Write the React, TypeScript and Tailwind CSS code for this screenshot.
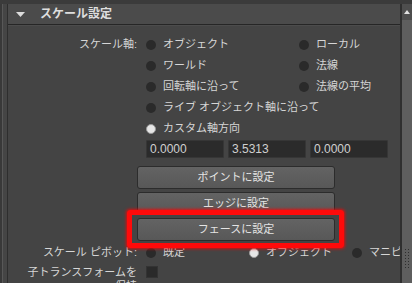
const font = "font-['Liberation_Sans','Noto_Sans_CJK_JP',sans-serif]"

function Radio({ checked = false }: { checked?: boolean }) {
  return checked ? (
    <span className="w-[10px] h-[10px] rounded-full bg-[#e6e6e6] border border-[#9a9a9a] shrink-0" />
  ) : (
    <span className="w-[10px] h-[10px] rounded-full bg-[#2a2a2a] shrink-0" />
  )
}

function Option({ label, checked, width }: { label: string; checked?: boolean; width: string }) {
  return (
    <div className={`flex items-center gap-[7px] shrink-0 ${width}`}>
      <Radio checked={checked} />
      <span className="whitespace-nowrap">{label}</span>
    </div>
  )
}

function Row({ label, children }: { label?: string; children: React.ReactNode }) {
  return (
    <div className="flex items-center h-[21px]">
      <div className="w-[129px] shrink-0 text-right whitespace-nowrap">{label}</div>
      <div className="flex items-center ml-[9px]">{children}</div>
    </div>
  )
}

function Field({ value }: { value: string }) {
  return (
    <div className="w-[78px] h-[18px] bg-[#2b2b2b] border border-[#363636] rounded-[1px] flex items-center pl-[3px] text-[#d0d0d0] text-[12px]">
      {value}
    </div>
  )
}

function Btn({ label }: { label: string }) {
  return (
    <div className="w-[198px] h-[23px] rounded-[3px] border border-[#2c2c2c] bg-gradient-to-b from-[#636363] to-[#585858] flex items-center justify-center text-[#e4e4e4]">
      {label}
    </div>
  )
}

export default function App() {
  return (
    <div className={`relative w-[412px] h-[283px] overflow-hidden bg-[#3b3b3b] flex flex-col text-[11px] leading-none text-[#d6d6d6] ${font}`}>
      <div className="h-[4px] shrink-0" />
      <div className="flex flex-1">
        <div className="w-[2px] shrink-0 bg-[#393939]" />
        <div className="w-[1px] shrink-0 bg-[#585858]" />
        <div className="w-[4px] shrink-0 bg-[#454545]" />
        <div className="w-[1px] shrink-0 bg-[#2e2e2e]" />

        <div className="flex-1 min-w-0 overflow-hidden flex flex-col">
          {/* header */}
          <div className="h-[21px] bg-[#4b4b4b] border-b border-[#262626] flex items-center">
            <svg width="9" height="5" viewBox="0 0 9 5" className="ml-[8px]">
              <polygon points="0,0 9,0 4.5,5" fill="#dcdcdc" />
            </svg>
            <span className="ml-[15px] font-bold text-[12px] text-[#dedede]">スケール設定</span>
          </div>

          {/* content */}
          <div className="flex-1 bg-[#444444] border-t border-[#4c4c4c] pt-[8px]">
            <Row label="スケール軸:">
              <Option label="オブジェクト" width="w-[153px]" />
              <Option label="ローカル" width="w-[90px]" />
            </Row>
            <Row>
              <Option label="ワールド" width="w-[153px]" />
              <Option label="法線" width="w-[90px]" />
            </Row>
            <Row>
              <Option label="回転軸に沿って" width="w-[153px]" />
              <Option label="法線の平均" width="w-[90px]" />
            </Row>
            <Row>
              <Option label="ライブ オブジェクト軸に沿って" width="w-[240px]" />
            </Row>
            <Row>
              <Option label="カスタム軸方向" checked width="w-[153px]" />
            </Row>

            <div className="flex gap-[4px] ml-[138px] mt-[1px]">
              <Field value="0.0000" />
              <Field value="3.5313" />
              <Field value="0.0000" />
            </div>

            <div className="flex flex-col gap-[3px] ml-[129px] mt-[8px]">
              <Btn label="ポイントに設定" />
              <Btn label="エッジに設定" />
              <Btn label="フェースに設定" />
            </div>

            <div className="mt-[1px]">
              <Row label="スケール ピボット:">
                <Option label="既定" width="w-[103px]" />
                <Option label="オブジェクト" checked width="w-[103px]" />
                <Option label="マニピ" width="w-[60px]" />
              </Row>
            </div>
            <div className="flex items-start">
              <div className="w-[129px] shrink-0 text-right leading-[14px] pt-[2px]">
                子トランスフォームを
                <br />
                保持
              </div>
              <span className="ml-[9px] mt-[3px] w-[12px] h-[12px] bg-[#2a2a2a] border border-[#333]" />
            </div>
          </div>
        </div>

        <div className="w-[2px] shrink-0 bg-[#2f2f2f]" />
        {/* scrollbar */}
        <div className="w-[10px] shrink-0 bg-[#5b5b5b] flex flex-col">
          <div className="h-[16px] bg-[#4e4e4e] flex items-center justify-center">
            <svg width="6" height="4" viewBox="0 0 6 4">
              <polygon points="0,4 6,4 3,0" fill="#e0e0e0" />
            </svg>
          </div>
          <div className="flex-1 bg-[#5e5e5e] flex flex-col justify-end pb-[25px] items-center">
            <div className="grid grid-cols-2 gap-[2px]">
              {Array.from({ length: 14 }).map((_, i) => (
                <span key={i} className="w-[1px] h-[1px] bg-[#2e2e2e]" />
              ))}
            </div>
          </div>
        </div>
      </div>

      {/* highlight box */}
      <div className="absolute left-[127px] top-[210px] w-[217px] h-[38px] rounded-[3px] border-[5px] border-[#ff0a0a] shadow-[0_0_3px_1px_rgba(255,0,0,0.8)]" />
    </div>
  )
}
